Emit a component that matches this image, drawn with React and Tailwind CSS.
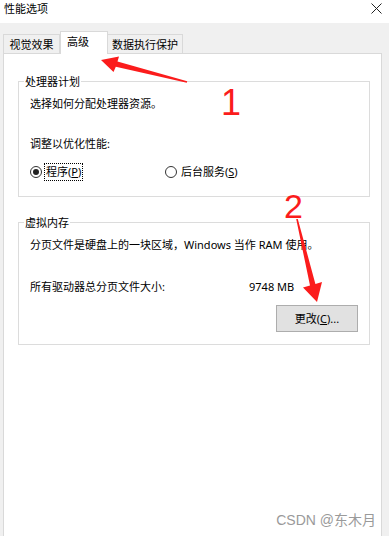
import React from 'react';

const FONT = "font-['Noto_Sans','Noto_Sans_CJK_SC',sans-serif]";

function Radio({ checked, focused, children }) {
  return (
    <div className="flex items-center">
      <span className="w-[12px] h-[12px] rounded-full border border-[#333] bg-white flex items-center justify-center">
        {checked && <span className="w-[6px] h-[6px] rounded-full bg-[#222]" />}
      </span>
      <span
        className={`ml-[2px] px-[1px] leading-[16px] border ${
          focused ? 'border-dotted border-black' : 'border-transparent'
        }`}
      >
        {children}
      </span>
    </div>
  );
}

function Group({ title, className, children }) {
  return (
    <div className={`relative ml-[14px] w-[352px] border border-[#dcdcdc] pl-[11px] pr-[11px] ${className}`}>
      <span className="absolute left-[5px] top-[-8px] bg-white px-[1px] leading-[16px]">{title}</span>
      {children}
    </div>
  );
}

export default function App() {
  return (
    <div className={`relative w-[389px] h-[536px] bg-[#f0f0f0] flex flex-col overflow-hidden text-[11px] text-black ${FONT}`}>
      {/* title bar */}
      <div className="h-[23px] bg-white flex items-start justify-between pl-[4px] pr-[7px]">
        <span className="leading-[16px] mt-[1px]">性能选项</span>
        <svg width="11" height="11" viewBox="0 0 11 11" className="mt-[3px]">
          <path d="M0.5 0.5 L10.5 10.5 M10.5 0.5 L0.5 10.5" stroke="#222" strokeWidth="1" />
        </svg>
      </div>

      {/* tabs */}
      <div className="relative z-10 h-[30px] flex items-end pl-[3px]">
        <div className="w-[57px] h-[19px] border border-b-0 border-[#d9d9d9] bg-[#f0f0f0] pt-[2px] text-center leading-[16px]">
          视觉效果
        </div>
        <div className="w-[48px] h-[23px] mb-[-1px] border border-b-0 border-[#d9d9d9] bg-white pt-[2px] pl-[6px] leading-[16px]">
          高级
        </div>
        <div className="w-[75px] h-[19px] border border-b-0 border-l-0 border-[#d9d9d9] bg-[#f0f0f0] pt-[2px] pl-[4px] leading-[16px]">
          数据执行保护
        </div>
      </div>

      {/* panel */}
      <div className="flex-1 ml-[3px] w-[379px] bg-white border border-b-0 border-[#d9d9d9] flex flex-col">
        <Group title="处理器计划" className="mt-[27px] pt-[14px] pb-[15px]">
          <div className="leading-[16px]">选择如何分配处理器资源。</div>
          <div className="leading-[16px] mt-[24px]">调整以优化性能:</div>
          <div className="flex mt-[11px]">
            <div className="w-[135px]">
              <Radio checked focused>
                程序(<span className="underline">P</span>)
              </Radio>
            </div>
            <Radio>
              后台服务(<span className="underline">S</span>)
            </Radio>
          </div>
        </Group>

        <Group title="虚拟内存" className="mt-[25px] pt-[14px] pb-[12px]">
          <div className="leading-[16px]">分页文件是硬盘上的一块区域，Windows 当作 RAM 使用。</div>
          <div className="flex leading-[16px] mt-[26px]">
            <span className="w-[219px]">所有驱动器总分页文件大小:</span>
            <span>9748 MB</span>
          </div>
          <div className="flex justify-end mt-[10px]">
            <button className="w-[82px] h-[27px] bg-[#e1e1e1] border border-[#adadad] leading-[16px] text-[11px]">
              更改(<span className="underline">C</span>)...
            </button>
          </div>
        </Group>

        <div className="mt-auto self-end mr-[5px] mb-[7px] text-[14px] leading-[18px] text-[#9a9a9a] font-['Liberation_Sans','Noto_Sans_CJK_SC',sans-serif]">
          CSDN @东木月
        </div>
      </div>

      {/* red annotations */}
      <svg className="absolute inset-0 z-20 pointer-events-none" width="389" height="536" viewBox="0 0 389 536">
        <polygon
          fill="#fb1c1c"
          points="101,60 119,56.5 117.5,61.5 187.2,81.3 186.8,82.7 115.8,66.8 113.5,72 101,60"
        />
        <polygon
          fill="#fb1c1c"
          points="317,302 322,282 315.4,284 297.8,218.9 296.2,219.1 310,285.5 303,287.5 317,302"
        />
      </svg>
      <span className="absolute z-20 left-[221px] top-[85px] text-[36px] leading-none text-[#fb1c1c] font-['Liberation_Sans',sans-serif]">
        1
      </span>
      <span className="absolute z-20 left-[284px] top-[189px] text-[34px] leading-none text-[#fb1c1c] font-['Liberation_Sans',sans-serif]">
        2
      </span>
    </div>
  );
}
